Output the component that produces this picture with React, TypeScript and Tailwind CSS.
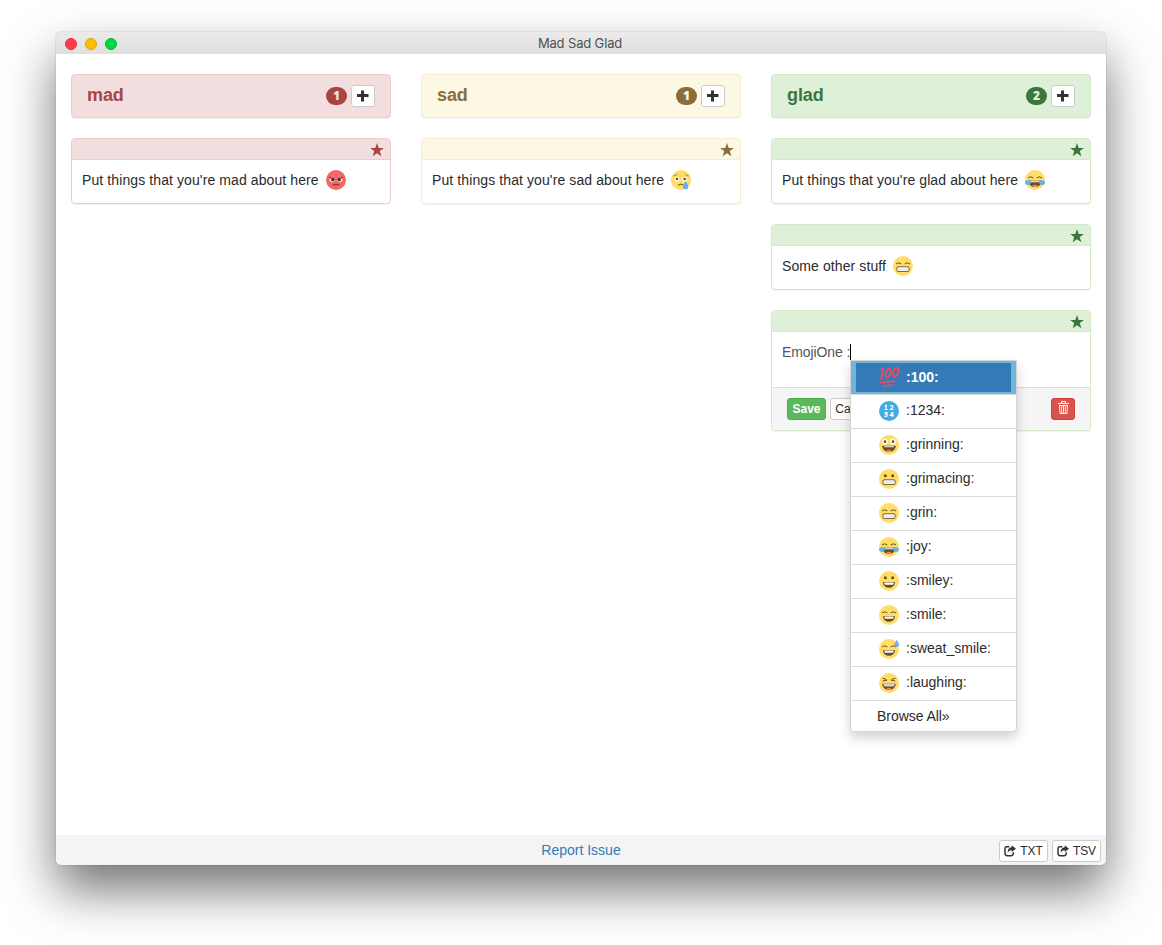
import type { ReactNode } from "react";

type Tone = "mad" | "sad" | "glad";

const tones = {
  mad: { panel: "border-[#ebccd1]", head: "bg-[#f2dede] border-[#ebccd1]", text: "text-[#a94442]", badge: "bg-[#a94442] text-[#f2dede]" },
  sad: { panel: "border-[#faebcc]", head: "bg-[#fcf8e3] border-[#faebcc]", text: "text-[#8a6d3b]", badge: "bg-[#8a6d3b] text-[#fcf8e3]" },
  glad: { panel: "border-[#d6e9c6]", head: "bg-[#dff0d8] border-[#d6e9c6]", text: "text-[#3c763d]", badge: "bg-[#3c763d] text-[#dff0d8]" },
};

const INK = "#664e27";

function Dots() {
  return (
    <g fill={INK}>
      <circle cx="19" cy="20" r="4.5" />
      <circle cx="41" cy="20" r="4.5" />
    </g>
  );
}

function Arcs() {
  return <path d="M10 23q7-6 14 0M36 23q7-6 14 0" fill="none" stroke={INK} strokeWidth="3" strokeLinecap="round" />;
}

function Teeth() {
  return (
    <g>
      <rect x="10" y="31" width="40" height="17" rx="7" fill="#7d6845" />
      <rect x="13" y="34" width="34" height="11" rx="4.500" fill="#fff" />
      <path d="M13 39.500h34M19 34v11M24.500 34v11M30 34v11M35.500 34v11M41 34v11" stroke="#d0cbc3" strokeWidth="1.200" />
    </g>
  );
}

function Smile() {
  return (
    <g>
      <path d="M14 33h32c1.500 0 2 1 2 2c-1.500 10-9 15-18 15s-16.500-5-18-15c0-1 .5-2 2-2z" fill={INK} />
      <path d="M15.500 34.500h29q-.5 6-3 7h-23q-2.500-1-3-7z" fill="#fff" />
    </g>
  );
}

function OpenMouth() {
  return (
    <g>
      <path d="M12 32h36c1.500 0 2 1 2 2c-1.500 12-10 17-20 17s-18.500-5-20-17c0-1 .5-2 2-2z" fill={INK} />
      <path d="M15 34h30l-1.500 3h-27z" fill="#fff" />
      <path d="M22 48q2-4 5-4q2 0 3 1q1-1 3-1q3 0 5 4q-4 3-8 3t-8-3z" fill="#ff717f" />
    </g>
  );
}

const faces: Record<string, ReactNode> = {
  mad: (
    <g>
      <path d="M11 24l15 6q-1 6-7 6t-8-6zM49 24l-15 6q1 6 7 6t8-6z" fill="#fff" />
      <circle cx="20" cy="29" r="4.500" fill="#3b2f1d" />
      <circle cx="40" cy="29" r="4.500" fill="#3b2f1d" />
      <path d="M10 22q6 5 15 6M50 22q-6 5-15 6" fill="none" stroke="#3b2f1d" strokeWidth="3" strokeLinecap="round" />
      <path d="M21 45q9-5 18 0" fill="none" stroke="#4c3b22" strokeWidth="3" strokeLinecap="round" />
    </g>
  ),
  sad: (
    <g>
      <circle cx="18" cy="28" r="7.500" fill="#fff" />
      <circle cx="41" cy="28" r="7.500" fill="#fff" />
      <circle cx="18" cy="27" r="4" fill={INK} />
      <circle cx="41" cy="27" r="4" fill={INK} />
      <path d="M8 18q6-1 10-5M42 13q4 4 10 5" fill="none" stroke="#917524" strokeWidth="2.500" strokeLinecap="round" />
      <path d="M22 45q8-6 15 0" fill="none" stroke={INK} strokeWidth="3" strokeLinecap="round" />
      <path d="M44 33c3 6 8 11 8 17a8 8 0 0 1-16 0c0-6 5-11 8-17z" fill="#65b1ef" />
    </g>
  ),
  grinning: (
    <g>
      <circle cx="18" cy="20" r="8.500" fill="#fff" />
      <circle cx="42" cy="20" r="8.500" fill="#fff" />
      <circle cx="18" cy="20" r="4" fill={INK} />
      <circle cx="42" cy="20" r="4" fill={INK} />
      <OpenMouth />
    </g>
  ),
  grimacing: <g><Dots /><Teeth /></g>,
  grin: <g><Arcs /><Teeth /></g>,
  joy: (
    <g>
      <Arcs />
      <OpenMouth />
      <path d="M18 30c2 8-3 15-10 15c-6 0-9-5-8-9c2-6 9-5 18-6zM42 30c-2 8 3 15 10 15c6 0 9-5 8-9c-2-6-9-5-18-6z" fill="#65b1ef" />
    </g>
  ),
  smiley: <g><Dots /><Smile /></g>,
  smile: <g><Arcs /><Smile /></g>,
  sweat_smile: (
    <g>
      <Arcs />
      <Smile />
      <path d="M53 2c3 6 7 10 7 15a7 7 0 0 1-14 0c0-5 4-9 7-15z" fill="#65b1ef" />
    </g>
  ),
  laughing: (
    <g>
      <path d="M12 16q8 1 12 6q-6-1-12 2M48 16q-8 1-12 6q6-1 12 2" fill="none" stroke={INK} strokeWidth="3" strokeLinejoin="round" strokeLinecap="round" />
      <OpenMouth />
      <path d="M13 33.500h34q-1 7-4 7h-26q-3 0-4-7z" fill="#d9d4cb" />
    </g>
  ),
};

function Emoji({ name }: { name: string }) {
  if (name === "100") {
    return (
      <svg viewBox="0 0 63 66" className="h-[22px] w-[21px] shrink-0" fill="none" stroke="#ed4c5c" strokeLinecap="round">
        <path d="M8 10l5-4-6 33" strokeWidth="6" strokeLinejoin="round" />
        <ellipse cx="27" cy="21" rx="6.500" ry="14" transform="rotate(18 27 21)" strokeWidth="5.500" />
        <ellipse cx="50" cy="19" rx="7.500" ry="14" transform="rotate(20 50 19)" strokeWidth="5.500" />
        <path d="M4 50q20-4 44-4M13 61q14-3 29-4" strokeWidth="5" />
      </svg>
    );
  }
  if (name === "1234") {
    return (
      <svg viewBox="0 0 60 60" className="size-[20px] shrink-0">
        <circle cx="30" cy="30" r="30" fill="#42ade2" />
        <g fill="none" stroke="#fff" strokeWidth="3.500">
          <path d="M17 14.500l4.500-1.500v12M17 25.500h9" />
          <path d="M34 16q1-2.500 4-2.500q4 0 4 3q0 2.500-7 8.500h8" />
          <path d="M17 35h7.500l-4.500 4.500q5 0 5 3.500q0 3.500-4 3.500q-3 0-4.500-1.500" />
          <path d="M41 48v-13h-1l-6 8.500h11" />
        </g>
      </svg>
    );
  }
  return (
    <svg viewBox="0 0 60 60" className="size-[20px] shrink-0">
      <circle cx="30" cy="30" r="30" fill={name === "mad" ? "#f46767" : "#ffdd67"} />
      {faces[name]}
    </svg>
  );
}

function Star() {
  return (
    <svg viewBox="0 0 14 14" className="size-[14px]" fill="currentColor">
      <path d="M7 .1l1.700 4.800h5.200l-4.150 3.200 1.600 5.100L7 10.200l-4.350 3 1.600-5.100L.1 4.900h5.200z" />
    </svg>
  );
}

function Plus() {
  return (
    <svg viewBox="0 0 12 12" className="size-[12px]" fill="#333">
      <path d="M4 .5h3v3.500h4.500v3H7v4.500H4V7H0V4h4z" />
    </svg>
  );
}

function Trash() {
  return (
    <svg viewBox="0 0 11 14" className="h-[14px] w-[11px]" fill="none" stroke="#fff">
      <path d="M0 2.500h11M3.500 2.500v-2h4v2" />
      <path d="M1 4.500h9M1.500 4.500l.5 8h7l.5-8M3.700 4.500v8M5.500 4.500v8M7.300 4.500v8" strokeWidth=".9" />
    </svg>
  );
}

function Share() {
  return (
    <svg viewBox="0 0 36 36" className="size-[12px]" fill="none">
      <path d="M16 5h-8q-5 0-5 5v15q0 7 7 7h11q7 0 7-7v-3" stroke="#333" strokeWidth="4.500" />
      <path d="M23 1l13 10-13 10v-6q-8 0-12 8q0-15 12-16z" fill="#333" />
    </svg>
  );
}

function ColumnHead({ tone, count }: { tone: Tone; count: number }) {
  const t = tones[tone];
  return (
    <div className={`flex h-[44px] items-center rounded border pl-[15px] pr-[15px] shadow-[0_1px_1px_rgba(0,0,0,0.05)] ${t.head}`}>
      <h2 className={`-mt-[3px] flex-1 text-[18px] leading-[20px] font-bold tracking-[-0.1px] ${t.text}`}>{tone}</h2>
      <span className={`mr-[4px] flex h-[18px] w-[21px] items-center justify-center rounded-[10px] font-['Open_Sans',sans-serif] text-[12px] leading-none font-extrabold ${t.badge}`}>{count}</span>
      <button className="flex h-[22px] w-[24px] items-center justify-center rounded-[3px] border border-[#ccc] bg-white"><Plus /></button>
    </div>
  );
}

function Card({ tone, children }: { tone: Tone; children: ReactNode }) {
  const t = tones[tone];
  return (
    <article className={`rounded border bg-white shadow-[0_1px_1px_rgba(0,0,0,0.05)] ${t.panel}`}>
      <div className={`flex h-[21px] items-center justify-end rounded-t-[3px] border-b pr-[6px] pt-px ${t.head} ${t.text}`}><Star /></div>
      {children}
    </article>
  );
}

function Note({ text, emoji }: { text: string; emoji: string }) {
  return (
    <div className="flex h-[43px] items-start gap-[7px] px-[10px] pt-[10px]">
      <span className="leading-[20px] tracking-[0.1px]">{text}</span>
      <Emoji name={emoji} />
    </div>
  );
}

const suggestions = ["1234", "grinning", "grimacing", "grin", "joy", "smiley", "smile", "sweat_smile", "laughing"];

function Suggestions() {
  return (
    <div className="absolute top-[28px] left-[78px] z-10 w-[167px] rounded-b border border-[#d4d4d4] bg-white text-[#2b2b2b] shadow-[0_6px_12px_rgba(0,0,0,0.175)]">
      <div className="flex h-[33px] items-center gap-[6px] border-x-[5px] border-y-2 border-[#6fb4d9] bg-[#337ab7] pl-[23px] pb-[2px] font-bold text-white">
        <Emoji name="100" />
        <span>:100:</span>
      </div>
      {suggestions.map((name) => (
        <div key={name} className="flex h-[34px] items-center gap-[7px] border-t border-[#ddd] pb-[2px] pl-[28px]">
          <Emoji name={name} />
          <span className="-mt-px">:{name}:</span>
        </div>
      ))}
      <div className="h-[31px] border-t border-[#ddd] pt-[5px] pl-[26px] leading-[20px] tracking-[-0.05px]">Browse All»</div>
    </div>
  );
}

const smallButton = "flex h-[22px] items-center justify-center rounded-[3px] border text-[12px]";

export default function App() {
  return (
    <div className="h-[945px] w-[1162px] overflow-hidden bg-white pt-[32px] pl-[56px] font-['Liberation_Sans',Arial,sans-serif] text-[14px] leading-[20px] text-[#2b2b2b]">
      <main className="flex h-[833px] w-[1050px] flex-col rounded-[5px] bg-white shadow-[0_0_1px_rgba(0,0,0,0.6),0_25px_50px_rgba(0,0,0,0.55)]">
        <header className="grid h-[22px] grid-cols-[1fr_auto_1fr] items-center rounded-t-[5px] bg-linear-to-b from-[#ebebeb] to-[#dfdfdf] px-[9px]">
          <div className="flex gap-[8px] pt-[2px]">
            <i className="size-[12px] rounded-full border border-[#e92d3b] bg-[#ff3b47]" />
            <i className="size-[12px] rounded-full border border-[#e0a000] bg-[#ffbd00]" />
            <i className="size-[12px] rounded-full border border-[#00b936] bg-[#00d742]" />
          </div>
          <h1 className="pr-[2px] font-['Inter',sans-serif] text-[13px] leading-[20px] tracking-[-0.15px] text-[#505050]">Mad Sad Glad</h1>
        </header>
        <section className="grid min-h-0 flex-1 grid-cols-3 items-start gap-[30px] px-[15px] pt-[20px]">
          <div className="flex flex-col gap-[20px]">
            <ColumnHead tone="mad" count={1} />
            <Card tone="mad"><Note text="Put things that you're mad about here" emoji="mad" /></Card>
          </div>
          <div className="flex flex-col gap-[20px]">
            <ColumnHead tone="sad" count={1} />
            <Card tone="sad"><Note text="Put things that you're sad about here" emoji="sad" /></Card>
          </div>
          <div className="flex flex-col gap-[20px]">
            <ColumnHead tone="glad" count={2} />
            <Card tone="glad"><Note text="Put things that you're glad about here" emoji="joy" /></Card>
            <Card tone="glad"><Note text="Some other stuff" emoji="grin" /></Card>
            <Card tone="glad">
              <div className="relative h-[55px] px-[10px] pt-[10px]">
                <div className="flex items-center tracking-[-0.1px] text-[#555]">
                  <span>EmojiOne :</span>
                  <i className="h-[16px] w-px bg-black" />
                </div>
                <Suggestions />
              </div>
              <div className="flex h-[43px] items-center gap-[4px] rounded-b-[3px] border-t border-[#ddd] bg-[#f5f5f5] px-[15px]">
                <button className={`${smallButton} w-[39px] border-[#4cae4c] bg-[#5cb85c] pb-px font-bold text-white`}>Save</button>
                <button className={`${smallButton} w-[48px] border-[#ccc] bg-white pb-px`}>Cancel</button>
                <button className={`${smallButton} ml-auto w-[24px] border-[#d43f3a] bg-[#d9534f] pb-[2px]`}><Trash /></button>
              </div>
            </Card>
          </div>
        </section>
        <footer className="grid h-[30px] grid-cols-[1fr_auto_1fr] items-center rounded-b-[5px] bg-[#f4f4f4] px-[5px]">
          <a className="col-start-2 text-[#337ab7]">Report Issue</a>
          <div className="flex justify-end gap-[4px] pt-[2px]">
            <button className={`${smallButton} w-[49px] gap-[4px] border-[#ccc] bg-white tracking-[-0.1px]`}><Share />TXT</button>
            <button className={`${smallButton} w-[49px] gap-[4px] border-[#ccc] bg-white tracking-[-0.1px]`}><Share />TSV</button>
          </div>
        </footer>
      </main>
    </div>
  );
}
